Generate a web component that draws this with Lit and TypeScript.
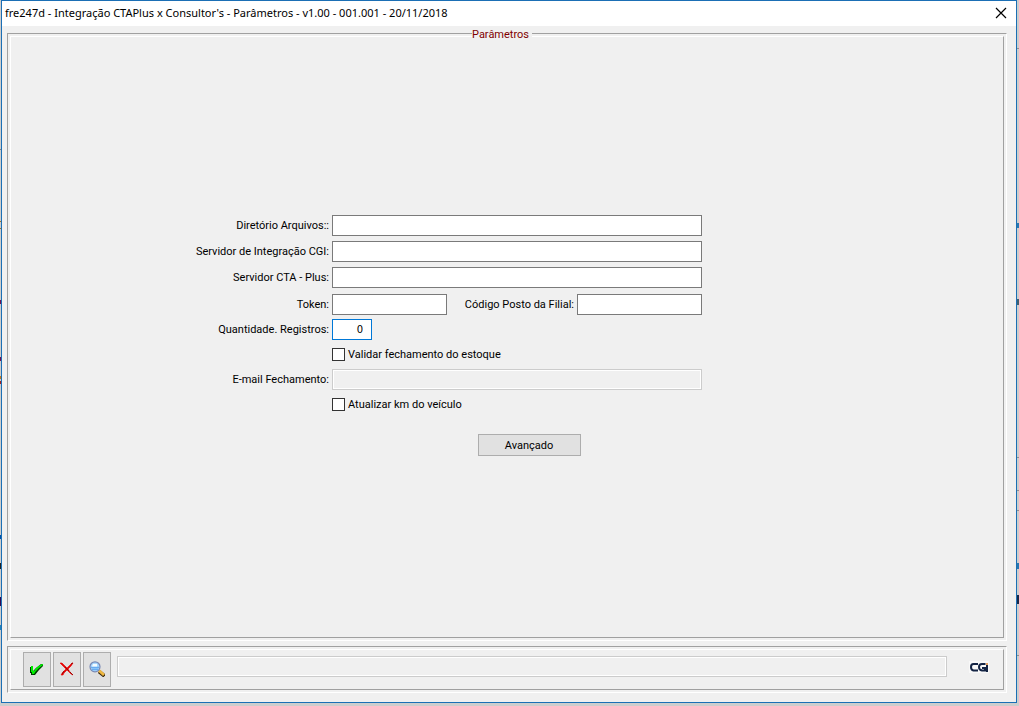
import { LitElement, html, css, svg } from "lit";
import { customElement, state } from "lit/decorators.js";

const checkIcon = svg`
  <path d="M1 6h3v4l3-3 5-4h2v2l-4 4-4 5h-4v-2h-1z" fill="#003c00"/>
  <path d="M2 5h2v5h1l2-3 4-3 2-1h1v1l-4 3-3 3-2 3h-2v-2h-1z" fill="#00f000"/>`;

const crossIcon = svg`
  <path d="M1 2h2l3 3 2 2 3-3 2-2h1l-2 3-3 3 2 3 3 3-2-1-4-4-3 3-1 2h-2l2-3 3-3-3-3z" fill="#e80000" stroke="#e80000" stroke-width=".6"/>
  <path d="M6 6l4 4M3 13l2-3M11 11l3 3M12 3l2-1" stroke="#8c0000" stroke-width=".8" fill="none"/>`;

const searchIcon = svg`
  <path d="M10 10.500l5.500 4.500" stroke="#3a2a10" stroke-width="3.600"/>
  <path d="M10 9.500l5 4.500" stroke="#f0b840" stroke-width="2.800"/>
  <circle cx="6" cy="5.800" r="5" fill="#a8d8ff" stroke="#7888b4" stroke-width="1.200"/>
  <path d="M2 6.500h8M3 8.500h6" stroke="#68acf0" stroke-width="1.400"/>
  <path d="M4 3h4v2.500H3z" fill="#f4fbff"/>`;

@customElement("app-root")
export class AppRoot extends LitElement {
  static styles = css`
    * { box-sizing: border-box; }
    :host {
      display: block;
      box-sizing: border-box;
      height: 100vh;
      min-height: 480px;
      padding: 0 2px 3px 1px;
      background:
        linear-gradient(transparent 149px, #808080 149px 150px, transparent 150px 221px, #a07020 221px 222px,
          transparent 222px 228px, #a07020 228px 229px, transparent 229px 300px, #701050 300px 304px,
          transparent 304px 357px, #701050 357px 361px, transparent 361px 376px, #c07820 376px 379px,
          transparent 379px 381px, #a02020 381px 384px, transparent 384px 535px, #0050a8 535px 539px,
          transparent 539px 563px, #202020 563px 569px, transparent 569px 597px, #300850 597px 606px,
          transparent 606px 625px, #2080b8 625px 630px, transparent 630px) left top / 1px 100% no-repeat,
        linear-gradient(transparent 48px, #909090 48px 49px, transparent 49px 223px, #2878b0 223px 228px,
          transparent 228px 299px, #406070 299px 305px, transparent 305px 457px, #909090 457px 458px,
          transparent 458px 490px, #909090 490px 491px, transparent 491px 510px, #909090 510px 511px,
          transparent 511px 563px, #2878b0 563px 569px, transparent 569px 595px, #182848 595px 604px,
          transparent 604px 655px, #909090 655px 656px, transparent 656px) right top / 2px 100% no-repeat,
        #cdcdcd;
      font: 11px/15px Roboto, "Liberation Sans", sans-serif;
      color: #000;
    }
    .window {
      height: 100%;
      display: flex;
      flex-direction: column;
      border: 1px solid #1b6fb5;
      background: #f0f0f0;
    }
    .title {
      display: flex;
      align-items: center;
      justify-content: space-between;
      height: 25px;
      padding: 0 8px 2px 3px;
      background: #fff;
      font: 11px/15px "Noto Sans", sans-serif;
    }
    h1 { margin: 0; font: inherit; white-space: nowrap; }
    button, input { font: inherit; color: inherit; border-radius: 0; margin: 0; }
    .close { display: grid; border: 0; background: none; padding: 0; width: 14px; height: 14px; place-items: center; }
    .body {
      flex: 1;
      min-height: 0;
      display: flex;
      flex-direction: column;
      gap: 5px;
      padding: 7px 9px 9px 5px;
    }
    .bevel {
      position: relative;
      min-width: 0;
      margin: 0;
      padding: 2px;
      border: 1px solid;
      border-color: #a0a0a0 #fff #fff #a0a0a0;
      display: flex;
    }
    .face {
      flex: 1;
      min-width: 0;
      display: flex;
      border: 1px solid;
      border-color: #fff #a0a0a0 #a0a0a0 #fff;
    }
    .main { flex: 1; }
    .main .face { flex-direction: column; justify-content: center; gap: 19px; padding-bottom: 3px; }
    legend {
      position: absolute;
      top: -7px;
      left: 0;
      right: 10px;
      margin: auto;
      width: 60px;
      padding: 0;
      background: #f0f0f0;
      color: #800000;
    }
    .form { display: flex; flex-direction: column; gap: 6px; }
    .group { display: flex; flex-direction: column; gap: 4px; }
    .group.wide { gap: 5px; }
    .row, .advanced {
      display: grid;
      grid-template-columns: minmax(0, 318fr) 370px minmax(0, 298fr);
      column-gap: 3px;
      align-items: center;
    }
    .row { height: 21px; }
    .row > label { text-align: right; white-space: nowrap; }
    .cell { grid-column: 2; display: flex; align-items: center; }
    .split { justify-content: space-between; }
    .pair { display: flex; align-items: center; gap: 3px; }
    input[type="text"] {
      width: 100%;
      height: 21px;
      padding: 0 8px;
      border: 1px solid #7a7a7a;
      background: #fff;
      outline: none;
    }
    input[type="text"].token { width: 115px; }
    input[type="text"].branch { width: 125px; }
    input[type="text"].count {
      width: 40px;
      border-color: #0078d7;
      text-align: right;
      font: 10px/15px "DejaVu Sans", sans-serif;
    }
    input[type="text"]:disabled, .status {
      border: 1px solid #ccc;
      background: #f0f0f0;
      box-shadow: inset 0 0 0 1px #fff;
    }
    input[type="checkbox"] {
      appearance: none;
      width: 13px;
      height: 13px;
      border: 1px solid #333;
      background: #fff;
    }
    input[type="checkbox"]:checked { box-shadow: inset 0 0 0 2px #fff; background: #333; }
    .push {
      width: 103px;
      height: 22px;
      padding: 0;
      border: 1px solid #adadad;
      background: #e1e1e1;
    }
    .advanced .push { grid-column: 2; justify-self: center; margin-left: 24px; }
    .bar .face { align-items: flex-start; padding: 2px 14px 2px 12px; }
    .tools { display: flex; gap: 2px; margin-right: 6px; }
    .tool {
      display: grid;
      place-items: center;
      width: 28px;
      height: 35px;
      padding: 0 0 1px;
      border: 1px solid #adadad;
      background: #e1e1e1;
    }
    .status { flex: 1; height: 21px; margin: 4px 22px 0 0; }
    .logo { display: block; margin-top: 9px; }
  `;

  @state() private validate = false;
  @state() private updateKm = false;

  render() {
    return html`
      <div class="window">
        <header class="title">
          <h1>fre247d - Integração CTAPlus x Consultor's - Parâmetros - v1.00 - 001.001 - 20/11/2018</h1>
          <button class="close" aria-label="Fechar">
            <svg width="12" height="12" viewBox="0 0 12 12"><path d="M1 1l10 10M11 1L1 11" stroke="#000" stroke-width="1.200"/></svg>
          </button>
        </header>
        <main class="body">
          <fieldset class="bevel main">
            <legend>Parâmetros</legend>
            <div class="face">
              <div class="form">
                <div class="group wide">
                  <div class="row"><label for="dir">Diretório Arquivos::</label><input id="dir" type="text"></div>
                  <div class="row"><label for="cgi">Servidor de Integração CGI:</label><input id="cgi" type="text"></div>
                  <div class="row"><label for="cta">Servidor CTA - Plus:</label><input id="cta" type="text"></div>
                </div>
                <div class="group">
                  <div class="row">
                    <label for="token">Token:</label>
                    <div class="cell split">
                      <input id="token" class="token" type="text">
                      <div class="pair"><label for="branch">Código Posto da Filial:</label><input id="branch" class="branch" type="text"></div>
                    </div>
                  </div>
                  <div class="row"><label for="count">Quantidade. Registros:</label><input id="count" class="count" type="text" value="0"></div>
                  <div class="row">
                    <div class="cell pair">
                      <input id="validate" type="checkbox" .checked=${this.validate}
                        @change=${(e: Event) => (this.validate = (e.target as HTMLInputElement).checked)}>
                      <label for="validate">Validar fechamento do estoque</label>
                    </div>
                  </div>
                  <div class="row"><label for="mail">E-mail Fechamento:</label><input id="mail" type="text" ?disabled=${!this.validate}></div>
                  <div class="row">
                    <div class="cell pair">
                      <input id="km" type="checkbox" .checked=${this.updateKm}
                        @change=${(e: Event) => (this.updateKm = (e.target as HTMLInputElement).checked)}>
                      <label for="km">Atualizar km do veículo</label>
                    </div>
                  </div>
                </div>
              </div>
              <div class="advanced"><button class="push">Avançado</button></div>
            </div>
          </fieldset>
          <footer class="bevel bar">
            <div class="face">
              <div class="tools">
                <button class="tool" aria-label="Confirmar"><svg width="16" height="16" viewBox="0 0 16 16">${checkIcon}</svg></button>
                <button class="tool" aria-label="Cancelar"><svg width="16" height="16" viewBox="0 0 16 16">${crossIcon}</svg></button>
                <button class="tool" aria-label="Pesquisar"><svg width="16" height="16" viewBox="0 0 16 16">${searchIcon}</svg></button>
              </div>
              <div class="status" role="status"></div>
              <svg class="logo" width="20" height="12" viewBox="0 0 20 12" role="img" aria-label="CGI">
                <rect width="20" height="12" fill="#f8f8f8"/>
                <path d="M9 3H4.500Q2 3 2 6t2.500 3.500H9M16.500 3H13q-3 0-3 3t3 3.500h3V7H13M18 4v7" fill="none" stroke="#142444" stroke-width="2"/>
                <path d="M17 2h2v2h-2z" fill="#e8a060"/>
              </svg>
            </div>
          </footer>
        </main>
      </div>
    `;
  }
}
